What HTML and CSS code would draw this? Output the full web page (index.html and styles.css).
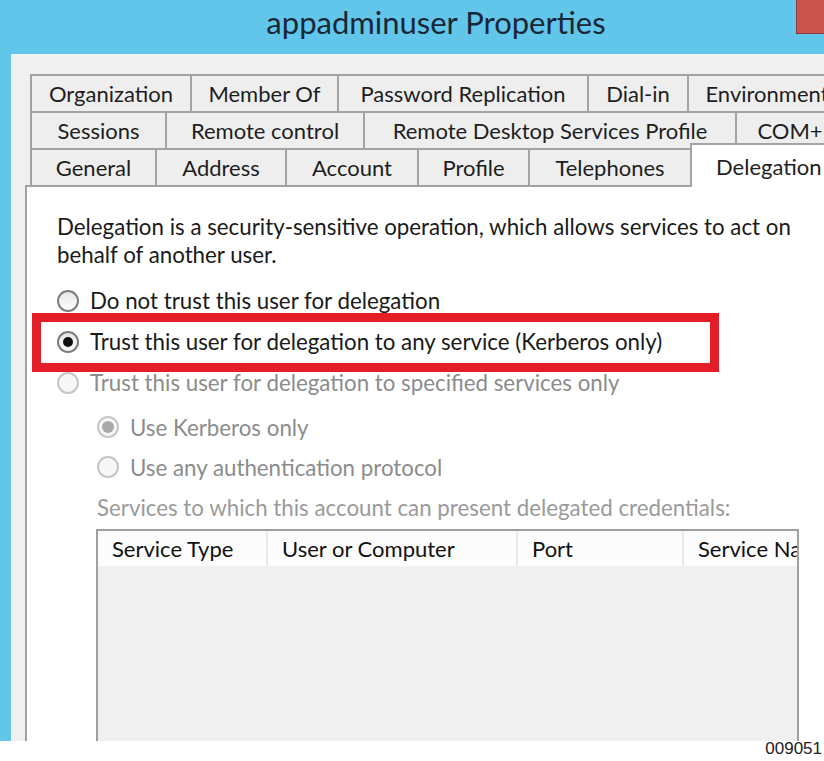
FILE: index.html
```html
<!DOCTYPE html>
<html lang="en">
<head>
    <meta charset="UTF-8">
    <title>appadminuser Properties</title>
    <link rel="stylesheet" href="styles.css">
</head>
<body>
    <div class="window">
        <div class="titlebar">
            <span class="title">appadminuser Properties</span>
            <div class="close"></div>
        </div>
        <div class="dialog">
            <div class="tabstrip">
                <div class="tabrow row1">
                    <div class="tab">Organization</div>
                    <div class="tab">Member Of</div>
                    <div class="tab">Password Replication</div>
                    <div class="tab">Dial-in</div>
                    <div class="tab last">Environment</div>
                </div>
                <div class="tabrow row2">
                    <div class="tab">Sessions</div>
                    <div class="tab">Remote control</div>
                    <div class="tab">Remote Desktop Services Profile</div>
                    <div class="tab last">COM+</div>
                </div>
                <div class="tabrow row3">
                    <div class="tab">General</div>
                    <div class="tab">Address</div>
                    <div class="tab">Account</div>
                    <div class="tab">Profile</div>
                    <div class="tab">Telephones</div>
                    <div class="tab last selected">Delegation</div>
                </div>
            </div>

            <div class="panel">
                <p class="intro">Delegation is a security-sensitive operation, which allows services to act on<br>behalf of another user.</p>

                <div class="options">
                    <div class="option"><span class="radio"></span>Do not trust this user for delegation</div>
                    <div class="option"><span class="radio checked"></span>Trust this user for delegation to any service (Kerberos only)</div>
                    <div class="option disabled"><span class="radio"></span>Trust this user for delegation to specified services only</div>
                </div>

                <div class="suboptions">
                    <div class="option disabled"><span class="radio checked"></span>Use Kerberos only</div>
                    <div class="option disabled"><span class="radio"></span>Use any authentication protocol</div>
                </div>

                <p class="services-label">Services to which this account can present delegated credentials:</p>

                <div class="listview">
                    <div class="list-header">
                        <div class="col">Service Type</div>
                        <div class="col">User or Computer</div>
                        <div class="col">Port</div>
                        <div class="col">Service Name</div>
                    </div>
                    <div class="list-body"></div>
                </div>

                <div class="highlight"></div>
            </div>
        </div>
    </div>
    <div class="figure-id">009051</div>
</body>
</html>
```

FILE: styles.css
```css
body {
    margin: 0;
    width: 824px;
    height: 761px;
    overflow: hidden;
    background-color: #ffffff;
    font-family: Lato, "Open Sans", sans-serif;
    color: #1a1a1a;
}
.window {
    position: relative;
    height: 741px;
    background-color: #62c6ea;
    display: flex;
    flex-direction: column;
    overflow: hidden;
}
.titlebar {
    height: 54px;
    flex: none;
    padding-left: 48px;
    text-align: center;
    line-height: 44px;
}
.title {
    font-size: 31px;
    color: #1a2736;
}
.close {
    position: absolute;
    top: 0;
    right: 0;
    width: 27px;
    height: 33px;
    background-color: #c9544d;
    border-left: 1px solid #8e3b36;
    border-bottom: 1px solid #8e3b36;
}
.dialog {
    flex: 1;
    margin-left: 11px;
    padding: 20px 0 0 14px;
    background-color: #f0f0f0;
    display: flex;
    flex-direction: column;
    min-height: 0;
}
.tabstrip {
    margin-left: 5px;
    width: 1000px;
}
.tabrow {
    display: grid;
    height: 37px;
}
.row1 {
    grid-template-columns: 160px 147px 250px 100px 160px;
}
.row2 {
    grid-template-columns: 135px 198px 372px 110px;
}
.row3 {
    grid-template-columns: 125px 130px 132px 111px 162px 150px;
}
.tab {
    box-sizing: border-box;
    height: 37px;
    border-top: 2px solid #a3a3a3;
    border-left: 2px solid #a3a3a3;
    background-color: #eeeeee;
    display: flex;
    align-items: center;
    justify-content: center;
    font-size: 22px;
    white-space: nowrap;
    color: #1e1e1e;
}
.tab.last {
    border-right: 2px solid #a3a3a3;
}
.tab.selected {
    position: relative;
    z-index: 1;
    margin-top: -5px;
    height: 44px;
    background-color: #ffffff;
    justify-content: flex-start;
    padding-left: 24px;
}
.panel {
    position: relative;
    flex: 1;
    background-color: #ffffff;
    border-top: 2px solid #a3a3a3;
    border-left: 2px solid #a3a3a3;
    padding-left: 30px;
    font-size: 22.3px;
    white-space: nowrap;
    min-height: 0;
    display: flex;
    flex-direction: column;
}
.intro {
    margin: 26px 0 0 0;
    line-height: 28px;
}
.options {
    margin-top: 11px;
}
.option {
    height: 41px;
    display: flex;
    align-items: center;
    gap: 11px;
}
.option.disabled {
    color: #8c8c8c;
}
.suboptions {
    margin-top: 4px;
    margin-left: 40px;
}
.suboptions .option {
    height: 40px;
}
.radio {
    box-sizing: border-box;
    width: 22px;
    height: 22px;
    border-radius: 50%;
    border: 2px solid #7d7d7d;
    background: linear-gradient(#e6e6e6, #ffffff);
    display: flex;
    align-items: center;
    justify-content: center;
    flex: none;
}
.radio.checked::after {
    content: "";
    width: 10px;
    height: 10px;
    border-radius: 50%;
    background-color: #111111;
}
.disabled .radio {
    border-color: #c6c6c6;
    background: #f7f7f7;
}
.disabled .radio.checked::after {
    width: 12px;
    height: 12px;
    background-color: #a9a9a9;
}
.services-label {
    margin: 7px 0 0 40px;
    line-height: 28px;
    color: #9a9a9a;
}
.listview {
    margin: 7px 0 0 39px;
    width: 703px;
    flex: 1;
    box-sizing: border-box;
    border: 2px solid #a0a0a0;
    border-bottom: none;
    background-color: #f0f0f0;
    overflow: hidden;
}
.list-header {
    display: grid;
    grid-template-columns: 170px 250px 166px 200px;
    height: 35px;
    background-color: #fcfcfc;
    font-size: 22px;
}
.col {
    border-right: 2px solid #e9e9e9;
    padding-left: 14px;
    display: flex;
    align-items: center;
    color: #111111;
    overflow: hidden;
}
.highlight {
    position: absolute;
    left: 5px;
    top: 126px;
    width: 687px;
    height: 59px;
    box-sizing: border-box;
    border: 9px solid #e31e26;
}
.figure-id {
    height: 20px;
    text-align: right;
    padding-right: 2px;
    font-family: "Liberation Sans Narrow", "Liberation Sans", sans-serif;
    font-size: 17px;
    line-height: 16px;
    color: #222222;
}
```
